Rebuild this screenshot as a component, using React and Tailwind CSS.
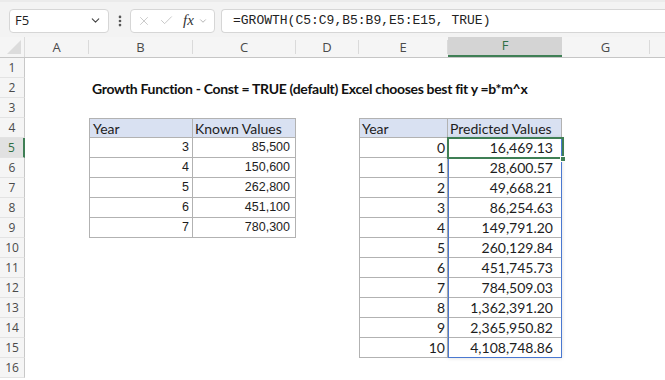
import React from "react";
import { ChevronDown, X, Check, EllipsisVertical } from "lucide-react";

const cols = [
  { k: "A", w: "w-[64px]" },
  { k: "B", w: "w-[104px]" },
  { k: "C", w: "w-[103px]" },
  { k: "D", w: "w-[63px]" },
  { k: "E", w: "w-[89px]" },
  { k: "F", w: "w-[114px]" },
  { k: "G", w: "w-[88px]" },
  { k: "", w: "w-[40px]" },
];

const left = [
  [3, "85,500"],
  [4, "150,600"],
  [5, "262,800"],
  [6, "451,100"],
  [7, "780,300"],
];

const right = [
  "16,469.13",
  "28,600.57",
  "49,668.21",
  "86,254.63",
  "149,791.20",
  "260,129.84",
  "451,745.73",
  "784,509.03",
  "1,362,391.20",
  "2,365,950.82",
  "4,108,748.86",
];

const CAL = "font-['Lato',sans-serif] text-[14px] text-[#1d1d1d]";
const ARIAL = "font-['Liberation_Sans',sans-serif] text-[12.5px] text-[#1d1d1d]";
const B = "border-[#b2b2b2]";

function Cell({ w, className = "", children }) {
  return (
    <div className={`${w} h-[20px] shrink-0 flex items-center ${className}`}>
      {children}
    </div>
  );
}

function Row({ n }) {
  const sel = n === 5;
  const cells = [];
  cells.push(<Cell key="A" w="w-[64px]" />);
  if (n === 2) {
    cells.push(
      <Cell key="B" w="w-[104px]" className="overflow-visible">
        <span className="pl-[3px] whitespace-nowrap font-['Lato',sans-serif] font-bold text-[14px] text-[#111] tracking-[-0.32px]">
          Growth Function - Const = TRUE (default) Excel chooses best fit y =b*m^x
        </span>
      </Cell>
    );
    cells.push(<Cell key="C" w="w-[103px]" />);
  } else if (n === 4) {
    cells.push(
      <Cell key="B" w="w-[104px]" className={`border-l border-t border-r border-b ${B} bg-[#d9e1f2] pl-[3px] ${CAL}`}>
        Year
      </Cell>
    );
    cells.push(
      <Cell key="C" w="w-[103px]" className={`border-t border-r border-b ${B} bg-[#d9e1f2] pl-[2px] ${CAL}`}>
        Known Values
      </Cell>
    );
  } else if (n >= 5 && n <= 9) {
    const [y, v] = left[n - 5];
    cells.push(
      <Cell key="B" w="w-[104px]" className={`border-l border-r border-b ${B} justify-end pr-[3px] ${ARIAL}`}>
        {y}
      </Cell>
    );
    cells.push(
      <Cell key="C" w="w-[103px]" className={`border-r border-b ${B} justify-end pr-[5px] ${ARIAL}`}>
        {v}
      </Cell>
    );
  } else {
    cells.push(<Cell key="B" w="w-[104px]" />);
    cells.push(<Cell key="C" w="w-[103px]" />);
  }
  cells.push(<Cell key="D" w="w-[63px]" />);
  if (n === 4) {
    cells.push(
      <Cell key="E" w="w-[89px]" className={`border-l border-t border-r border-b ${B} bg-[#d9e1f2] pl-[2px] ${CAL}`}>
        Year
      </Cell>
    );
    cells.push(
      <Cell key="F" w="w-[114px]" className={`border-t border-r border-b ${B} bg-[#d9e1f2] pl-[2px] ${CAL}`}>
        Predicted Values
      </Cell>
    );
  } else if (n >= 5 && n <= 15) {
    cells.push(
      <Cell key="E" w="w-[89px]" className={`border-l border-r border-b ${B} justify-end pr-[2px] ${CAL}`}>
        {n - 5}
      </Cell>
    );
    cells.push(
      <Cell key="F" w="w-[114px]" className={`border-r border-b ${B} justify-end pr-[8px] ${CAL}`}>
        {right[n - 5]}
      </Cell>
    );
  } else {
    cells.push(<Cell key="E" w="w-[89px]" />);
    cells.push(<Cell key="F" w="w-[114px]" />);
  }
  cells.push(<Cell key="G" w="w-[88px]" />);
  cells.push(<Cell key="H" w="w-[40px]" />);

  return (
    <div className="flex h-[20px]">
      <div
        className={
          sel
            ? "w-[25px] shrink-0 h-[20px] flex items-center justify-center border-r-2 border-r-[#3f7f55] border-b border-b-[#e3e3e3] bg-[#e1e1e1] text-[#2f6f45] text-[12px] font-['Open_Sans',sans-serif]"
            : "w-[25px] shrink-0 h-[20px] flex items-center justify-center border-r border-r-[#c8c8c8] border-b border-b-[#e3e3e3] bg-[#f5f5f5] text-[#4a4a4a] text-[12px] font-['Open_Sans',sans-serif]"
        }
      >
        {n}
      </div>
      {cells}
    </div>
  );
}

export default function App() {
  const rows = Array.from({ length: 16 }, (_, i) => i + 1);
  return (
    <div className="w-[665px] h-[380px] overflow-hidden bg-white relative font-['Open_Sans',sans-serif]">
      {/* Formula bar */}
      <div className="h-[37px] bg-[#f3f3f3] flex items-center pl-[9px] pt-[2px] border-t-[2px] border-t-[#ebebeb]">
        <div className="w-[100px] h-[24px] bg-white border border-[#d6d6d6] rounded-[4px] flex items-center justify-between pl-[5px] pr-[6px]">
          <span className="text-[13px] text-[#222]">F5</span>
          <ChevronDown size={13} strokeWidth={2} className="text-[#444]" />
        </div>
        <div className="w-[21px] flex justify-center">
          <EllipsisVertical size={14} strokeWidth={2.6} className="text-[#555]" />
        </div>
        <div className="w-[85px] h-[24px] bg-white border border-[#d6d6d6] rounded-[4px] flex items-center pl-[6px]">
          <X size={14} strokeWidth={1.2} className="text-[#b5b5b5]" />
          <Check size={15} strokeWidth={1.2} className="text-[#b5b5b5] ml-[8px]" />
          <span className="ml-[9px] font-['Liberation_Serif',serif] italic text-[15px] text-[#333] leading-none">fx</span>
          <ChevronDown size={10} strokeWidth={1.5} className="text-[#888] ml-[4px]" />
        </div>
        <div className="ml-[6px] flex-1 h-[24px] bg-white border border-[#d6d6d6] border-r-0 rounded-l-[4px] flex items-center pl-[11px]">
          <span className="font-['Liberation_Mono',monospace] text-[13px] text-[#222] whitespace-nowrap">
            =GROWTH(C5:C9,B5:B9,E5:E15, TRUE)
          </span>
        </div>
      </div>

      {/* Column headers */}
      <div className="flex h-[21px] bg-[#f5f5f5] border-b border-[#c6c6c6]">
        <div className="w-[25px] shrink-0 relative border-r border-[#dcdcdc]">
          <svg width="14" height="14" className="absolute right-[3px] bottom-[3px]">
            <polygon points="14,0 14,14 0,14" fill="#dcdcdc" />
          </svg>
        </div>
        {cols.map((c) =>
          c.k === "F" ? (
            <div
              key={c.k}
              className={`${c.w} shrink-0 flex items-center justify-center bg-[#d4d4d4] border-b-2 border-[#3f7f55] text-[#2f6f45] text-[13px]`}
            >
              {c.k}
            </div>
          ) : (
            <div
              key={c.k || "H"}
              className={`${c.w} shrink-0 flex items-center justify-center border-r border-[#dadada] text-[#4a4a4a] text-[13px] my-[3px] pt-[1px]`}
            >
              {c.k}
            </div>
          )
        )}
      </div>

      {/* Sheet */}
      <div className="relative">
        {rows.map((n) => (
          <Row key={n} n={n} />
        ))}
        <div className="absolute left-[448px] top-[80px] w-[114px] h-[220px] border border-[#4a78d0] shadow-[0_0_4px_rgba(0,0,0,0.15)] pointer-events-none" />
        <div className="absolute left-[447px] top-[79px] w-[117px] h-[22px] border-2 border-[#3f7f55] pointer-events-none" />
        <div className="absolute left-[560px] top-[98px] w-[6px] h-[6px] bg-[#3f7f55] border border-white pointer-events-none" />
      </div>
    </div>
  );
}
